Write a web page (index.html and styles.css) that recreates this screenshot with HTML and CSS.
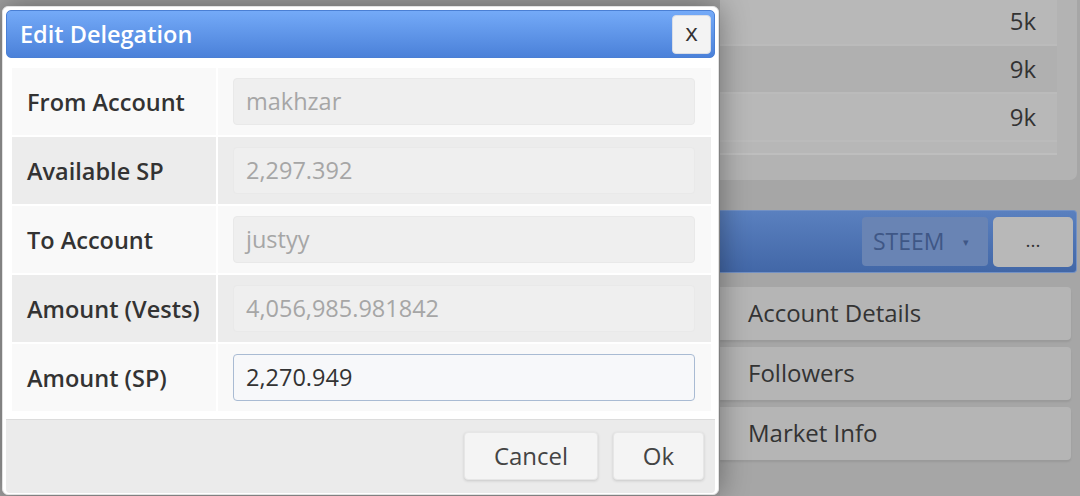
FILE: index.html
```html
<!DOCTYPE html>
<html>
<head>
<meta charset="utf-8">
<link rel="stylesheet" href="styles.css">
</head>
<body>
<div class="page">
  <div class="page-left"></div>
  <div class="page-right">
    <div class="stats-panel">
      <div class="stats-table">
        <div class="stat-row">5k</div>
        <div class="stat-row alt">9k</div>
        <div class="stat-row">9k</div>
      </div>
    </div>
    <div class="toolbar">
      <div class="select">STEEM <span class="caret">▾</span></div>
      <div class="more-btn">...</div>
    </div>
    <div class="menu">
      <div class="menu-item">Account Details</div>
      <div class="menu-item">Followers</div>
      <div class="menu-item">Market Info</div>
    </div>
  </div>
</div>

<div class="dialog">
  <div class="titlebar">
    <span class="title">Edit Delegation</span>
    <button class="close-btn">x</button>
  </div>
  <div class="content">
    <div class="form-grid">
      <div class="cell label odd">From Account</div>
      <div class="cell field odd"><div class="input disabled">makhzar</div></div>
      <div class="cell label even">Available SP</div>
      <div class="cell field even"><div class="input disabled">2,297.392</div></div>
      <div class="cell label odd">To Account</div>
      <div class="cell field odd"><div class="input disabled">justyy</div></div>
      <div class="cell label even">Amount (Vests)</div>
      <div class="cell field even"><div class="input disabled">4,056,985.981842</div></div>
      <div class="cell label odd">Amount (SP)</div>
      <div class="cell field odd"><div class="input active">2,270.949</div></div>
    </div>
  </div>
  <div class="buttonpane">
    <button class="btn cancel">Cancel</button>
    <button class="btn ok">Ok</button>
  </div>
</div>
</body>
</html>
```

FILE: styles.css
```css
* { box-sizing: border-box; }
html, body {
  margin: 0;
  padding: 0;
  width: 1080px;
  height: 496px;
  overflow: hidden;
}
body {
  background: #a6a6a6;
  font-family: "Open Sans", "Noto Sans", "Liberation Sans", sans-serif;
  color: #333;
}

/* Background page */
.page {
  display: flex;
  height: 496px;
}
.page-left {
  width: 720px;
  flex: none;
  background: #a0a0a0;
}
.page-right {
  width: 357px;
  flex: none;
  display: flex;
  flex-direction: column;
}
.stats-panel {
  height: 180px;
  background: #b3b3b3;
  border-bottom-right-radius: 7px;
  padding-right: 20px;
}
.stats-table {
  background: #b7b7b7;
  height: 155px;
  border-bottom: 2px solid #bebebe;
}
.stat-row {
  height: 48px;
  border-bottom: 2px solid #bbbbbb;
  background: #b8b8b8;
  text-align: right;
  padding-right: 21px;
  font-size: 24px;
  line-height: 46px;
  color: #333;
}
.stat-row:first-child {
  height: 46px;
  line-height: 42px;
}
.stat-row.alt { background: #b0b0b0; }

.toolbar {
  margin-top: 30px;
  height: 63px;
  background: linear-gradient(to bottom, #5a80bf, #4267a7);
  border: 1px solid #7391c4;
  border-left: none;
  border-radius: 0 4px 4px 0;
  display: flex;
  justify-content: flex-end;
  align-items: center;
  padding-right: 3px;
  gap: 5px;
}
.select {
  width: 126px;
  height: 49px;
  background: #6984b4;
  border-radius: 4px;
  color: #3f5786;
  font-size: 23px;
  line-height: 48px;
  padding-left: 11px;
}
.caret {
  font-size: 11px;
  vertical-align: 4px;
  margin-left: 12px;
  color: #3f5786;
}
.more-btn {
  width: 80px;
  height: 50px;
  background: #b8b8b8;
  border-radius: 5px;
  text-align: center;
  line-height: 46px;
  font-size: 19px;
  color: #333;
}
.menu {
  margin-top: 14px;
  display: flex;
  flex-direction: column;
  gap: 7px;
  padding-right: 6px;
}
.menu-item {
  height: 53px;
  background: #b5b5b5;
  border-radius: 0 4px 4px 0;
  box-shadow: 0 2px 2px rgba(0,0,0,0.08);
  padding-left: 28px;
  font-size: 24px;
  line-height: 52px;
  color: #333;
}

/* Dialog (overlay) */
.dialog {
  position: absolute;
  left: 2px;
  top: 6px;
  width: 717px;
  height: 489px;
  background: #fff;
  border: 1px solid #e2e2e2;
  border-radius: 6px;
  padding: 3px;
  box-shadow: 0 0 30px rgba(0,0,0,0.4);
  display: flex;
  flex-direction: column;
}
.titlebar {
  height: 48px;
  flex: none;
  border: 1px solid #4a7fd4;
  border-radius: 5px;
  background: linear-gradient(to bottom, #74aaf8, #4b81d9);
  display: flex;
  align-items: center;
  justify-content: space-between;
  padding: 0 3px 0 13px;
}
.title {
  color: #fff;
  font-size: 23.5px;
  font-weight: 600;
}
.close-btn {
  width: 39px;
  height: 39px;
  border: 1px solid #d9dde6;
  border-radius: 4px;
  background: #f3f3f3;
  font-family: "Open Sans", "Noto Sans", sans-serif;
  font-size: 24px;
  color: #333;
  padding: 0 0 5px 0;
  line-height: 1;
}
.content {
  flex: 1;
  padding: 10px 4px 8px 6px;
  background: #fff;
}
.form-grid {
  display: grid;
  grid-template-columns: 204px 1fr;
  grid-auto-rows: 67px;
  gap: 2px;
  background: #fff;
}
.cell {
  display: flex;
  align-items: center;
}
.cell.odd { background: #f9f9f9; }
.cell.even { background: #ececec; }
.label {
  padding-left: 15px;
  font-size: 23.5px;
  font-weight: 600;
  color: #333;
}
.field {
  padding: 0 16px 0 15px;
}
.input {
  width: 100%;
  height: 47px;
  border-radius: 4px;
  padding-left: 12px;
  font-size: 23.5px;
  line-height: 44px;
}
.input.disabled {
  background: #efefef;
  border: 1px solid #e9e9e9;
  color: #a6a6a6;
}
.input.active {
  background: #f7f8fa;
  border: 1px solid #a9bbd3;
  color: #333;
}
.buttonpane {
  height: 74px;
  flex: none;
  background: #ebebeb;
  border-top: 1px solid #dcdcdc;
  border-radius: 0 0 4px 4px;
  display: flex;
  justify-content: flex-end;
  align-items: flex-start;
  padding: 12px 11px 0 0;
  gap: 15px;
}
.btn {
  height: 48px;
  border: 1px solid #e6e6e6;
  border-radius: 4px;
  background: #f4f4f4;
  box-shadow: 0 1px 3px rgba(0,0,0,0.15);
  font-family: "Open Sans", "Noto Sans", sans-serif;
  font-size: 24px;
  color: #444;
  padding: 0 0 2px 0;
}
.btn.cancel { width: 134px; }
.btn.ok { width: 91px; }
```
